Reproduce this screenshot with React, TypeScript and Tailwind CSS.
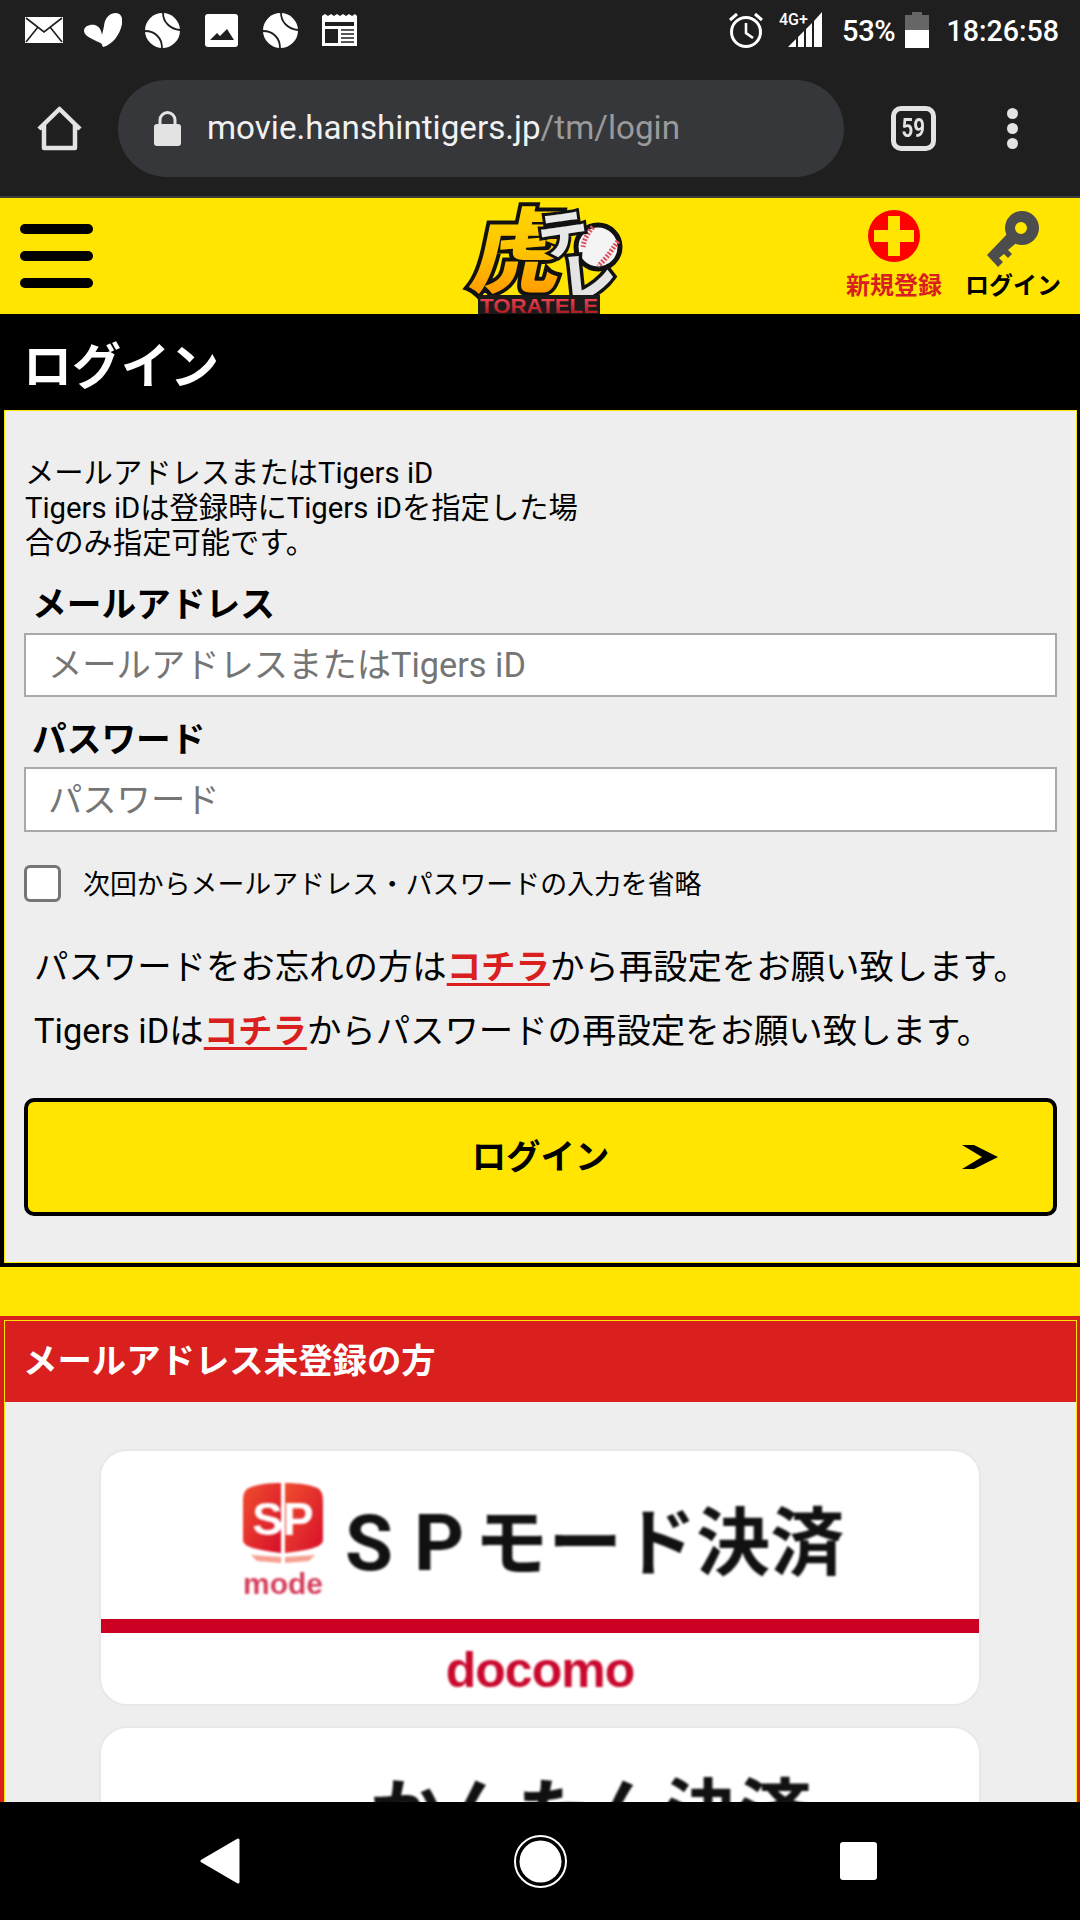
import React from 'react';

const Ball: React.FC = () => (
  <svg width="35" height="35" viewBox="0 0 35 35">
    <circle cx="17.5" cy="17.5" r="17.5" fill="#fff" />
    <path d="M18 0C18 9 25 16 35 17" fill="none" stroke="#1f1f1f" strokeWidth="1.8" />
    <path d="M0 18C10 18 17 25 17 35" fill="none" stroke="#1f1f1f" strokeWidth="1.8" />
  </svg>
);

const StatusBar: React.FC = () => (
  <div className="flex items-center h-[60px] pl-[25px] pr-[21px] bg-[#1f1f1f] text-white">
    <svg width="38" height="26" viewBox="0 0 38 26">
      <rect width="38" height="26" fill="#fff" />
      <path d="M1 1L19 15L37 1M1 25L13 10M37 25L25 10" fill="none" stroke="#1f1f1f" strokeWidth="1.6" />
    </svg>
    <svg className="ml-[21px]" width="38" height="35" viewBox="84 13 38 35">
      <path d="M103 47C99 40 103 33 104 26C105 17 110 13 116 13C121 13 123 18 122 24C120 35 112 45 103 47Z" fill="#fff" />
      <path d="M84 31C84 26 90 24 95 25C101 27 103 33 102 44C96 40 84 37 84 31Z" fill="#fff" />
    </svg>
    <div className="ml-[23px] flex"><Ball /></div>
    <svg className="ml-[25px]" width="33" height="33" viewBox="0 0 33 33">
      <rect width="33" height="33" rx="3" fill="#fff" />
      <path d="M5 26L12 19L15 22L22 15L29 26Z" fill="#1f1f1f" />
    </svg>
    <div className="ml-[25px] flex"><Ball /></div>
    <svg className="ml-[24px]" width="35" height="32" viewBox="0 0 35 32">
      <path d="M0 2L3 0L6 2L9 0L12 2L15 0L18 2L21 0L24 2L27 0L30 2L33 0L35 2V32H0Z" fill="#fff" />
      <rect x="3" y="8" width="29" height="4" fill="#1f1f1f" />
      <rect x="3" y="15" width="13" height="14" fill="#1f1f1f" />
      <path d="M19 16H32M19 20H32M19 24H32M19 28H32" stroke="#1f1f1f" strokeWidth="1.6" />
    </svg>

    <svg className="ml-auto" width="34" height="36" viewBox="0 0 34 36">
      <circle cx="17" cy="20" r="14.5" fill="none" stroke="#fff" strokeWidth="3" />
      <path d="M17 11V21L24 26" fill="none" stroke="#fff" strokeWidth="2.6" />
      <path d="M1 8L8 2M33 8L26 2" fill="none" stroke="#fff" strokeWidth="3" />
    </svg>
    <svg className="ml-[16px]" width="43" height="36" viewBox="0 0 43 36">
      <text x="0" y="13" fontSize="16" fontWeight="500" fill="#fff" fontFamily="Roboto, sans-serif">4G+</text>
      <path d="M9 35L17 27V35ZM19 25L25 19V35H19ZM27 17L33 11V35H27ZM35 9L43 0V35H35Z" fill="#fff" />
    </svg>
    <span className="ml-[20px] mt-[3px] text-[29px] font-medium leading-none tracking-[-0.3px]">53%</span>
    <div className="ml-[10px] flex flex-col items-center w-[24px] h-[36px]">
      <div className="w-[10px] h-[3px] bg-[#666666]" />
      <div className="w-[24px] h-[15px] bg-[#666666]" />
      <div className="w-[24px] h-[18px] bg-white" />
    </div>
    <span className="ml-[17px] mt-[3px] text-[28.6px] font-medium leading-none">18:26:58</span>
  </div>
);

const Toolbar: React.FC = () => (
  <div className="flex items-center h-[138px] pl-[37px] bg-[#1f1f1f] border-b-2 border-[#3c3c3c]">
    <svg width="45" height="45" viewBox="0 0 45 45">
      <path d="M2 23L22.5 3L43 23M7 19V42H38V19" fill="none" stroke="#e3e3e3" strokeWidth="4.5" strokeLinejoin="round" />
    </svg>
    <div className="ml-[36px] flex items-center w-[726px] h-[97px] rounded-full bg-[#36373a] pl-[36px]">
      <svg width="27" height="35" viewBox="0 0 27 35">
        <path d="M6 14V9A7.5 7.5 0 0 1 21 9V14" fill="none" stroke="#e3e3e3" strokeWidth="3" />
        <rect y="13" width="27" height="22" rx="3" fill="#e3e3e3" />
      </svg>
      <span className="ml-[26px] text-[33.2px] leading-none text-[#f1f1f1]">
        movie.hanshintigers.jp<span className="text-[#9a9a9a]">/tm/login</span>
      </span>
    </div>
    <div className="ml-[47px] flex items-center justify-center w-[45px] h-[45px] rounded-[10px] border-[5px] border-[#e3e3e3] text-[#e3e3e3]">
      <span className="text-[25px] font-bold leading-none scale-x-[0.82]">59</span>
    </div>
    <div className="ml-[71px] flex flex-col gap-[4px]">
      <div className="w-[11px] h-[11px] rounded-full bg-[#e3e3e3]" />
      <div className="w-[11px] h-[11px] rounded-full bg-[#e3e3e3]" />
      <div className="w-[11px] h-[11px] rounded-full bg-[#e3e3e3]" />
    </div>
  </div>
);

const Logo: React.FC = () => (
  <svg width="180" height="116" viewBox="0 3 180 116">
    <defs>
      <linearGradient id="tora" x1="0" y1="0" x2="0" y2="1">
        <stop offset="0" stopColor="#ffe100" />
        <stop offset="0.55" stopColor="#ffc400" />
        <stop offset="1" stopColor="#ff8a00" />
      </linearGradient>
      <linearGradient id="tele" x1="0" y1="0" x2="0" y2="1">
        <stop offset="0" stopColor="#ff5060" />
        <stop offset="1" stopColor="#a01018" />
      </linearGradient>
    </defs>
    <circle cx="148" cy="52" r="22" fill="#f4f4f4" stroke="#111" strokeWidth="5" />
    <path d="M143 32C136 40 134 46 133 52M168 46C160 58 154 66 148 71" fill="none" stroke="#dc5060" strokeWidth="5" strokeDasharray="2 1.5" />
    <text x="24" y="90" fontSize="92" fontWeight="900" fill="url(#tora)" stroke="#111" strokeWidth="8" paintOrder="stroke" fontFamily="Noto Sans CJK JP, sans-serif" transform="skewX(-12) translate(12 0)">虎</text>
    <text x="88" y="58" fontSize="50" fontWeight="900" fill="#e8e8e8" stroke="#111" strokeWidth="6" paintOrder="stroke" fontFamily="Noto Sans CJK JP, sans-serif" transform="rotate(-8 110 40)">テ</text>
    <text x="110" y="104" fontSize="56" fontWeight="900" fill="#e4e4e4" stroke="#111" strokeWidth="7" paintOrder="stroke" fontFamily="Noto Sans CJK JP, sans-serif" transform="rotate(-6 130 80)">レ</text>
    <rect x="28" y="100" width="122" height="20" fill="#1a1a1a" />
    <text x="30" y="118" textLength="118" lengthAdjust="spacingAndGlyphs" fontSize="21" fontWeight="700" fill="url(#tele)" fontFamily="Liberation Sans, sans-serif">TORATELE</text>
  </svg>
);

const SiteHeader: React.FC = () => (
  <div className="flex items-center h-[116px] bg-[#ffe500] pl-[20px]">
    <div className="flex flex-col gap-[17px] w-[73px]">
      <div className="h-[10px] rounded-full bg-black" />
      <div className="h-[10px] rounded-full bg-black" />
      <div className="h-[10px] rounded-full bg-black" />
    </div>
    <div className="ml-[357px] flex"><Logo /></div>
    <div className="ml-[204px] flex w-[120px] flex-col items-center">
      <svg width="52" height="52" viewBox="0 0 52 52">
        <circle cx="26" cy="26" r="26" fill="#ff0000" />
        <path d="M20 6H32V20H46V32H32V46H20V32H6V20H20Z" fill="#ffe500" />
      </svg>
      <span className="mt-[8px] text-[24px] font-bold leading-[32px] text-[#d9201f]">新規登録</span>
    </div>
    <div className="ml-[11px] flex flex-col items-center">
      <svg width="52" height="56" viewBox="0 0 52 56">
        <path fillRule="evenodd" d="M35 0A17 17 0 1 1 35 34A17 17 0 1 1 35 0ZM34 11A6 6 0 1 0 34 23A6 6 0 1 0 34 11Z" fill="#4d4d4d" />
        <path d="M23 20L0 44L11 56L16 51L12 47L17 43L21 47L25 43L21 39L34 28Z" fill="#4d4d4d" />
      </svg>
      <span className="mt-[3px] text-[24px] font-bold leading-[32px] text-black">ログイン</span>
    </div>
  </div>
);

const LoginForm: React.FC = () => (
  <div className="bg-black px-[4px] pb-[4px] pr-[3px]">
    <div className="h-[96px] -mx-[4px] pl-[23px] flex items-center pt-[10px]">
      <h1 className="text-[49px] font-bold leading-none text-white">ログイン</h1>
    </div>
    <div className="border border-[#ffe500] bg-[#eeeeee] pt-[45px] pb-[46px] pl-[19px] pr-[19px] text-black">
      <p className="pl-[1px] text-[29.3px] leading-[35px] w-[570px]">
        メールアドレスまたはTigers iD
        <br />
        Tigers iDは登録時にTigers iDを指定した場合のみ指定可能です。
      </p>
      <label className="block mt-[19px] pl-[8px] text-[34.7px] font-bold leading-[50px]">メールアドレス</label>
      <input
        className="block mt-[3px] w-full h-[64px] border-2 border-[#a9a9a9] bg-white pl-[22px] text-[34.3px] placeholder:text-[#757575]"
        placeholder="メールアドレスまたはTigers iD"
      />
      <label className="block mt-[18px] pl-[8px] text-[34.7px] font-bold leading-[50px]">パスワード</label>
      <input
        className="block mt-[2px] w-full h-[65px] border-2 border-[#a9a9a9] bg-white pl-[22px] text-[34.3px] placeholder:text-[#757575]"
        placeholder="パスワード"
      />
      <div className="flex items-center mt-[33px] h-[37px]">
        <input type="checkbox" className="appearance-none w-[37px] h-[37px] rounded-[6px] border-[3px] border-[#767676] bg-white" />
        <span className="ml-[22px] pt-[3px] text-[26.9px]">次回からメールアドレス・パスワードの入力を省略</span>
      </div>
      <p className="mt-[33px] pl-[10px] text-[34.4px] leading-[64px] whitespace-nowrap">
        パスワードをお忘れの方は<a className="font-bold text-[#d9201f] underline decoration-[3px] underline-offset-[4px]">コチラ</a>から再設定をお願い致します。
      </p>
      <p className="pl-[10px] text-[34.4px] leading-[64px] whitespace-nowrap">
        Tigers iDは<a className="font-bold text-[#d9201f] underline decoration-[3px] underline-offset-[4px]">コチラ</a>からパスワードの再設定をお願い致します。
      </p>
      <button className="relative flex items-center justify-center mt-[35px] pt-[2px] w-full h-[118px] rounded-[10px] border-4 border-black bg-[#ffe500] text-[34.4px] font-bold text-black">
        ログイン
        <svg className="absolute right-[55px] top-[43px]" width="36" height="24" viewBox="0 0 36 24">
          <path d="M0 0H12L36 12L12 24H0L20 12Z" fill="#000" />
        </svg>
      </button>
    </div>
  </div>
);

const PayCard: React.FC<{ children: React.ReactNode }> = ({ children }) => (
  <div className="w-[882px] h-[257px] rounded-[28px] border-2 border-[#e8e8e8] bg-white overflow-hidden">
    {children}
  </div>
);

const SpModeMark: React.FC = () => (
  <svg width="80" height="84" viewBox="0 0 80 84">
    <defs>
      <linearGradient id="spmode" x1="0" y1="0" x2="1" y2="1">
        <stop offset="0" stopColor="#f0502e" />
        <stop offset="1" stopColor="#d80f2c" />
      </linearGradient>
    </defs>
    <path d="M38 0V4C24 4 10 6 4 10C0 14 0 18 0 24V60C0 66 4 70 38 74Z" fill="url(#spmode)" />
    <path d="M42 0V4C56 4 70 6 76 10C80 14 80 18 80 24V60C80 66 76 70 42 74Z" fill="url(#spmode)" />
    <path d="M8 76L38 78V84L14 82ZM72 76L42 78V84L66 82Z" fill="#f5a090" />
    <text x="40" y="56" textAnchor="middle" fontSize="46" fontWeight="700" fill="#fff" fontFamily="Liberation Sans, sans-serif">SP</text>
  </svg>
);

const Unregistered: React.FC = () => (
  <div className="bg-[#ffe500] pt-[49px]">
    <div className="bg-[#d9201f] pt-[4px] pl-[4px] pr-[3px]">
      <div className="border-x border-t border-[#ffe500]">
        <div className="h-[81px] pl-[18px] flex items-center text-[34.4px] font-bold text-white bg-[#d9201f]">
          メールアドレス未登録の方
        </div>
        <div className="bg-[#eeeeee] pt-[47px] pl-[94px] flex flex-col gap-[20px]">
          <PayCard>
            <div className="flex items-start h-[168px] pl-[142px] pt-[28px] blur-[1.2px]">
              <div className="flex flex-col items-center w-[80px]">
                <SpModeMark />
                <span className="mt-[9px] text-[30px] font-bold leading-[24px] text-[#d5405c] [font-family:'Liberation_Sans',sans-serif]">mode</span>
              </div>
              <span className="ml-[22px] mt-[22px] flex items-center font-bold leading-[86px] text-[#111111] whitespace-nowrap">
                <span className="text-[78px] tracking-[21px]">S</span>
                <span className="text-[78px] tracking-[10px]">P</span>
                <span className="text-[74px]">モード決済</span>
              </span>
            </div>
            <div className="h-[14px] bg-[#cc0022] blur-[0.6px]" />
            <div className="flex justify-center pt-[12px] blur-[0.8px]">
              <span className="text-[50px] font-bold leading-[50px] tracking-[-1px] text-[#c9092d] [font-family:'Liberation_Sans',sans-serif]">docomo</span>
            </div>
          </PayCard>
          <PayCard>
            <div className="flex pl-[269px] pt-[43px] blur-[1.2px]">
              <span className="text-[73.6px] font-bold leading-[88px] text-[#111111] whitespace-nowrap">かんたん決済</span>
            </div>
          </PayCard>
        </div>
      </div>
    </div>
  </div>
);

const NavBar: React.FC = () => (
  <div className="flex items-center h-[118px] pl-[200px] bg-black">
    <svg width="40" height="46" viewBox="0 0 40 46">
      <path d="M38 2V44L2 23Z" fill="#fff" stroke="#fff" strokeWidth="3" strokeLinejoin="round" />
    </svg>
    <svg className="ml-[274px]" width="53" height="53" viewBox="0 0 53 53">
      <circle cx="26.5" cy="26.5" r="25.5" fill="none" stroke="#fff" strokeWidth="2" />
      <circle cx="26.5" cy="26.5" r="21" fill="#fff" />
    </svg>
    <div className="ml-[273px] w-[37px] h-[38px] rounded-[3px] bg-white" />
  </div>
);

export default function App() {
  return (
    <div className="flex flex-col w-[1080px] h-[1920px] overflow-hidden bg-black [font-family:Roboto,'Noto_Sans_CJK_JP',sans-serif]">
      <StatusBar />
      <Toolbar />
      <SiteHeader />
      <div className="flex-1 min-h-0 overflow-hidden">
        <LoginForm />
        <Unregistered />
      </div>
      <NavBar />
    </div>
  );
}
